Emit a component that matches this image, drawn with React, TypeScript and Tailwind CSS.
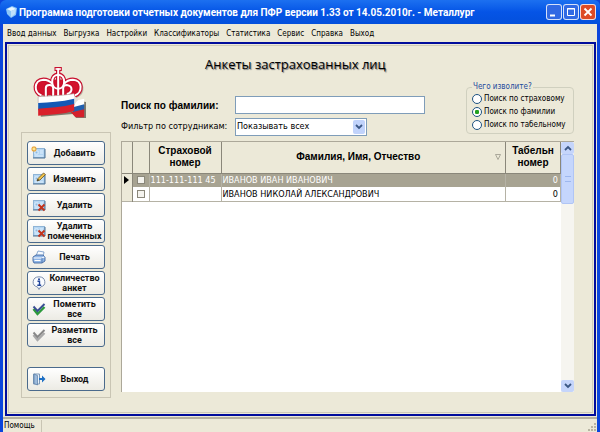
import { useState } from 'react'
import type { ReactNode } from 'react'

const menuItems = ['Ввод данных', 'Выгрузка', 'Настройки', 'Классификаторы', 'Статистика', 'Сервис', 'Справка', 'Выход']

const searchModes = ['Поиск по страховому', 'Поиск по фамилии', 'Поиск по табельному']

const people = [
  { number: '111-111-111 45', name: 'ИВАНОВ ИВАН ИВАНОВИЧ', tab: 0 },
  { number: '', name: 'ИВАНОВ НИКОЛАЙ АЛЕКСАНДРОВИЧ', tab: 0 }
]

const Card = ({ children }: { children?: ReactNode }) => (
  <svg viewBox="0 0 14 14" className="size-3.5 overflow-visible">
    <rect x="1.5" y="2.5" width="11" height="9" fill="#b5d6f3" stroke="#8fb4d6" />
    <path d="M1 12h12M13 3v9" stroke="#4f7395" />
    <path d="M3 5h3v3H3zM8 5h3M8 7h3M3 10h8" stroke="#eaf5ff" fill="#8fbbe3" strokeWidth=".8" />
    {children}
  </svg>
)

const AddIcon = () => (
  <Card>
    <path d="M2 0v6M-1 3h6M0 1l4 4M4 1l-4 4" stroke="#e9a63c" strokeWidth="1.1" />
    <circle cx="2" cy="3" r="1.3" fill="#ffe68a" />
  </Card>
)

const EditIcon = () => (
  <Card>
    <path d="M5 9l1-2.5 5.500-5.500 2 1.500L8 8z" fill="#f0c24b" stroke="#665022" strokeWidth=".8" />
    <path d="M5 9l1-2 1 1z" fill="#222" />
  </Card>
)

const DeleteIcon = () => (
  <Card>
    <path d="M6.500 6.500l6 6M12.500 6.500l-6 6" stroke="#c2331b" strokeWidth="1.900" />
  </Card>
)

const PrintIcon = () => (
  <svg viewBox="0 0 14 14" className="size-3.5">
    <path d="M4 6l2-5 6 1-1 5z" fill="#f5faff" stroke="#6f94c4" strokeWidth=".8" />
    <path d="M1 7l3-2h7l2 2v4l-3 2H2l-1-2z" fill="#8fb5e6" stroke="#44699f" strokeWidth=".9" />
    <path d="M1.500 8h8l3-1M2.500 10.500h6" fill="none" stroke="#fff" />
    <path d="M10 8v5" stroke="#44699f" strokeWidth=".7" />
  </svg>
)

const InfoIcon = () => (
  <svg viewBox="0 0 14 14" className="size-3.5">
    <path d="M7 .8a6 5.200 0 0 1 1.500 10.200L7 13.500l-1.500-2.500A6 5.200 0 0 1 7 .8z" fill="#fafcff" stroke="#7d8fae" />
    <path d="M5.500 5.200h2v3.800M5.300 9.200h3.900" fill="none" stroke="#20449b" strokeWidth="1.400" />
    <circle cx="7" cy="3.200" r="1" fill="#20449b" />
  </svg>
)

const ChecksIcon = ({ top, bottom }: { top: string; bottom: string }) => (
  <svg viewBox="0 0 14 14" className="size-3.5">
    <path d="M1.500 7l4 5 7-7" fill="none" stroke={bottom} strokeWidth="2.400" />
    <path d="M1.500 4.500l4 4.500 7-7" fill="none" stroke={top} strokeWidth="1.900" />
  </svg>
)

const ExitIcon = () => (
  <svg viewBox="0 0 14 14" className="size-3.5">
    <path d="M1.500 2h6v10h-6z" fill="#e8f1fa" stroke="#7c98b8" />
    <path d="M2 2l3.500 1.500V13L2 11.500z" fill="#9dbbdc" stroke="#587ba5" strokeWidth=".7" />
    <path d="M13.500 7L10 3.500V6H7v2h3v2.500z" fill="#1d6fc4" />
  </svg>
)

const actions = [
  { label: 'Добавить', icon: <AddIcon /> },
  { label: 'Изменить', icon: <EditIcon /> },
  { label: 'Удалить', icon: <DeleteIcon /> },
  { label: 'Удалить помеченных', icon: <DeleteIcon /> },
  { label: 'Печать', icon: <PrintIcon /> },
  { label: 'Количество анкет', icon: <InfoIcon /> },
  { label: 'Пометить все', icon: <ChecksIcon top="#3a4f94" bottom="#2c9a3c" /> },
  { label: 'Разметить все', icon: <ChecksIcon top="#888" bottom="#aaa" /> }
]

const ActionButton = ({ label, icon }: { label: string; icon: ReactNode }) => (
  <button
    type="button"
    className="flex h-6 w-full items-center rounded-[3px] border border-[#4a6a8c] bg-linear-to-b from-white to-[#ecebe4] pr-px pl-1 font-['Roboto','Liberation_Sans',sans-serif] text-[9px] leading-[10px] font-bold text-[#111]"
  >
    <span className="shrink-0">{icon}</span>
    <span className="min-w-0 flex-1 text-center">{label}</span>
  </button>
)

const crownLines = (
  <>
    <path d="M100 25v92" />
    <path d="M100 44c-24 0-24 42 0 42s24-42 0-42z" />
    <path d="M50 106C26 98 26 60 56 59c12 0 20 5 26 12" />
    <path d="M63 116V84q0-9 11-9t11 9v32" />
    <path d="M150 106c24-8 24-46-6-47-12 0-20 5-26 12" />
    <path d="M115 116V84q0-9 11-9 14 2 14 13t-14 14" />
  </>
)

const Logo = () => (
  <svg viewBox="25 18 158 156" className="h-[52px] w-[53px]" aria-hidden="true">
    {/* drop shadow */}
    <path d="M46 120h104l34 6v48l-28 2-12-14-96 8z" fill="#5b5649" opacity=".75" />
    <path d="M54 108C32 98 30 66 60 64h88c28 2 28 34 6 44z" fill="none" stroke="#5b5649" strokeWidth="12" opacity=".35" />
    {/* crown */}
    <path d="M50 106C26 98 26 60 56 59h88c30 1 30 39 6 47z" fill="#d3132d" />
    <g fill="none" stroke="#c8102e" strokeWidth="13">{crownLines}</g>
    <path d="M89 27h22" stroke="#c8102e" strokeWidth="12" />
    <g fill="none" stroke="#fff" strokeWidth="6">{crownLines}</g>
    <path d="M92 27h16" stroke="#fff" strokeWidth="5" />
    {/* ribbon */}
    <path d="M144 124l34-8v19l-34 9z" fill="#fff" />
    <path d="M144 142l34-9v17l-34 9z" fill="#215fae" />
    <path d="M134 152l10 4 34-8v24h-26z" fill="#d5202b" />
    <path d="M146 106l14 12-12 18-2 0z" fill="#e4e1da" />
    <path d="M40 110q26-2 52-3t56-6v24q-26 8-56 9t-52 4z" fill="#fff" />
    <path d="M40 129q26-2 52-4t56-9v20q-26 9-56 11t-52 4z" fill="#1458b5" />
    <path d="M40 146q26-2 52-4t56-10v20q-26 9-56 11t-52 4z" fill="#d9202b" />
    <path d="M40 129v-19q26-2 52-3t56-6" fill="none" stroke="#b9a9a6" strokeWidth="2" />
  </svg>
)

const Chevron = ({ up = false }: { up?: boolean }) => (
  <svg viewBox="0 0 8 6" className="h-1.5 w-2" aria-hidden="true">
    <path d={up ? 'M1 5l3-3 3 3' : 'M1 1l3 3 3-3'} fill="none" stroke="#3b5784" strokeWidth="1.800" />
  </svg>
)

const TitleBar = () => (
  <header className="flex h-6 shrink-0 items-center rounded-t-md bg-linear-to-b from-[#1c70f0] via-[#0554e6] to-[#0350dc] pr-1 pl-1.5 text-white">
    <svg viewBox="0 0 12 12" className="size-3" aria-hidden="true">
      <path d="M0 3l6-3 5 2-1 7-5 3-4-4z" fill="#8cc6f8" />
      <path d="M1 3l5-2 4 2-5 2z" fill="#eaf6ff" />
      <path d="M5 5l5-2-1 5-4 3z" fill="#bfe0fb" />
    </svg>
    <h1 className="ml-px flex-1 truncate pt-px font-['Roboto','Liberation_Sans',sans-serif] text-[10px] font-bold">
      Программа подготовки отчетных документов для ПФР версии 1.33 от 14.05.2010г. - Металлург
    </h1>
    <div className="flex gap-px">
      <button type="button" aria-label="Свернуть" className="size-4 rounded-[3px] border border-white/80 bg-[#3169e3]">
        <svg viewBox="0 0 14 14"><path d="M3 10.500h5" stroke="#fff" strokeWidth="2" /></svg>
      </button>
      <button type="button" aria-label="Развернуть" className="size-4 rounded-[3px] border border-white/80 bg-[#3169e3]">
        <svg viewBox="0 0 14 14"><path d="M3.500 3.500h7v7h-7zM3 4h8" fill="none" stroke="#fff" /></svg>
      </button>
      <button type="button" aria-label="Закрыть" className="size-4 rounded-[3px] border border-white/80 bg-[#dd4b26]">
        <svg viewBox="0 0 14 14"><path d="M3.500 3.500l7 7M10.500 3.500l-7 7" stroke="#fff" strokeWidth="1.800" /></svg>
      </button>
    </div>
  </header>
)

const Sidebar = () => (
  <aside className="flex w-[90px] shrink-0 flex-col">
    <div className="flex h-[86px] items-end pb-3.5 pl-3">
      <Logo />
    </div>
    <div className="flex flex-1 flex-col gap-0.5 border border-[#c9c5b4] px-[5px] pt-2 pb-1.5">
      {actions.map((action, index) => (
        <ActionButton key={index} label={action.label} icon={action.icon} />
      ))}
      <div className="mt-auto">
        <ActionButton label="Выход" icon={<ExitIcon />} />
      </div>
    </div>
  </aside>
)

const SearchForm = () => {
  const [mode, setMode] = useState(1)

  return (
    <form className="flex items-start justify-between">
      <div className="grid grid-cols-[114px_190px] items-center gap-y-1 pt-3.5">
        <label htmlFor="surname" className="font-['Liberation_Sans',sans-serif] text-[10px] font-bold">Поиск по фамилии:</label>
        <input id="surname" type="text" className="h-[18px] border border-[#7f9db9] bg-white px-1 text-[9px] outline-none" />
        <label htmlFor="filter" className="text-[9px] whitespace-nowrap">Фильтр по сотрудникам:</label>
        <div className="relative w-[132px]">
          <select id="filter" className="block h-[18px] w-full appearance-none border border-[#7f9db9] bg-white pl-px text-[9px] outline-none">
            <option>Показывать всех</option>
          </select>
          <span className="pointer-events-none absolute inset-y-0.5 right-0.5 flex w-3 items-center justify-center rounded-xs bg-[#c1d3fb]">
            <Chevron />
          </span>
        </div>
      </div>
      <fieldset className="w-[108px] rounded-sm border border-[#d0d0bf] pb-0.5 pl-[5px]">
        <legend className="px-px text-[8px] leading-[10px] text-[#1c4a9c]">Чего изволите?</legend>
        {searchModes.map((label, index) => (
          <label key={label} className="flex h-[13px] items-center gap-0.5 text-[8px] whitespace-nowrap">
            <input
              type="radio"
              name="mode"
              checked={mode === index}
              onChange={() => setMode(index)}
              className="size-2.5 shrink-0 appearance-none rounded-full border border-[#1d5281] bg-white checked:bg-radial checked:from-[#21a121] checked:from-35% checked:to-white checked:to-45%"
            />
            {label}
          </label>
        ))}
      </fieldset>
    </form>
  )
}

const PeopleTable = () => (
  <div className="mt-[5px] flex flex-1 border-t border-l border-[#aca899] bg-white">
    <div className="min-w-0 flex-1">
      <table className="w-full table-fixed border-collapse text-[9px] [&_td]:p-0 [&_th]:p-0">
        <colgroup>
          <col className="w-2.5" />
          <col className="w-[17px]" />
          <col className="w-[72px]" />
          <col />
          <col className="w-[55px]" />
        </colgroup>
        <thead className="bg-[#ece9d8] font-['Liberation_Sans',sans-serif] text-[10px] leading-3">
          <tr className="h-[31px] border-b border-[#8a877a]">
            <td className="border-r border-[#8a877a]" />
            <td className="border-r border-[#8a877a]" />
            <th className="border-r border-[#8a877a]">Страховой номер</th>
            <th className="border-r border-[#8a877a]">
              <div className="flex items-center">
                <span className="flex-1">Фамилия, Имя, Отчество</span>
                <svg viewBox="0 0 6 6" className="mr-1 size-1.5"><path d="M.5 .5h5L3 5.500z" fill="none" stroke="#9a978a" strokeWidth=".8" /></svg>
              </div>
            </th>
            <th className="border-r border-[#8a877a]">Табельн номер</th>
          </tr>
        </thead>
        <tbody className="leading-3">
          {people.map((person, index) => (
            <tr
              key={person.name}
              className={index === 0 ? 'h-3.5 bg-[#a7a392] text-white' : 'h-3.5 border-b border-[#b5b2a5] bg-white'}
            >
              <td className="border-r border-[#8a877a] bg-[#ece9d8]">
                {index === 0 && (
                  <svg viewBox="0 0 5 8" className="mx-auto h-2 w-[5px]"><path d="M0 0l5 4-5 4z" fill="#000" /></svg>
                )}
              </td>
              <td className="border-r border-[#b5b2a5]">
                <input
                  type="checkbox"
                  aria-label={person.name}
                  className="mx-auto block size-2 appearance-none border border-[#8a877a] bg-[#f4f3ee]"
                />
              </td>
              <td className="border-r border-[#b5b2a5]"><span className="pl-px whitespace-nowrap">{person.number}</span></td>
              <td className="border-r border-[#b5b2a5]"><span className="pl-px whitespace-nowrap">{person.name}</span></td>
              <td className="border-r border-[#b5b2a5] text-right"><span className="pr-0.5">{person.tab}</span></td>
            </tr>
          ))}
        </tbody>
      </table>
    </div>
    <div className="flex w-[13px] flex-col bg-[#f6f5f0]">
      <button type="button" aria-label="Вверх" className="flex h-3 items-center justify-center rounded-xs bg-[#c5d5fb]">
        <Chevron up />
      </button>
      <div className="flex h-[50px] items-center justify-center rounded-xs border border-[#b0c5f5] bg-[#c5d6fc]">
        <span className="h-1.5 w-1.5 border-y border-[#9db7ee]" />
      </div>
      <button type="button" aria-label="Вниз" className="mt-auto flex h-3 items-center justify-center rounded-xs bg-[#c5d5fb]">
        <Chevron />
      </button>
    </div>
  </div>
)

const App = () => {
  return (
    <div className="flex min-h-screen flex-col bg-[#0b45dc] font-['DejaVu_Sans_Condensed','DejaVu_Sans',sans-serif] text-black">
      <TitleBar />
      <div className="mx-[3px] flex flex-1 flex-col bg-[#ece9d8]">
        <nav className="flex h-[18px] shrink-0 items-center gap-[7px] pt-px pl-1 text-[8px]">
          {menuItems.map((item) => (
            <a key={item} href="#" className="whitespace-nowrap">{item}</a>
          ))}
        </nav>
        <main className="mr-px ml-0.5 flex flex-1 flex-col border-2 border-[#000c9c] bg-[#ece9d8]">
          <div className="m-px flex flex-1 gap-2.5 border border-[#cfcbb9] pr-[18px] pb-3.5 pl-3">
            <Sidebar />
            <section className="flex min-w-0 flex-1 flex-col pb-1.5">
              <h2 className="mt-2 mb-2 pl-[84px] font-['Open_Sans','DejaVu_Sans',sans-serif] text-[13px] leading-5 font-medium [text-shadow:1px_1px_1px_#777]">
                Анкеты застрахованных лиц
              </h2>
              <SearchForm />
              <PeopleTable />
            </section>
          </div>
        </main>
        <footer className="mt-px flex h-[15px] shrink-0 items-center justify-between border-t-2 border-[#b5b1a0] pl-px text-[8px]">
          <span className="border-r border-[#c9c5b4] pr-1.5">Помощь</span>
          <svg viewBox="0 0 10 10" className="size-2.5 self-end" aria-hidden="true">
            <path d="M7 1h2v2H7zM4 4h2v2H4zM7 4h2v2H7zM1 7h2v2H1zM4 7h2v2H4zM7 7h2v2H7z" fill="#b8b4a2" />
          </svg>
        </footer>
      </div>
    </div>
  )
}

export default App
